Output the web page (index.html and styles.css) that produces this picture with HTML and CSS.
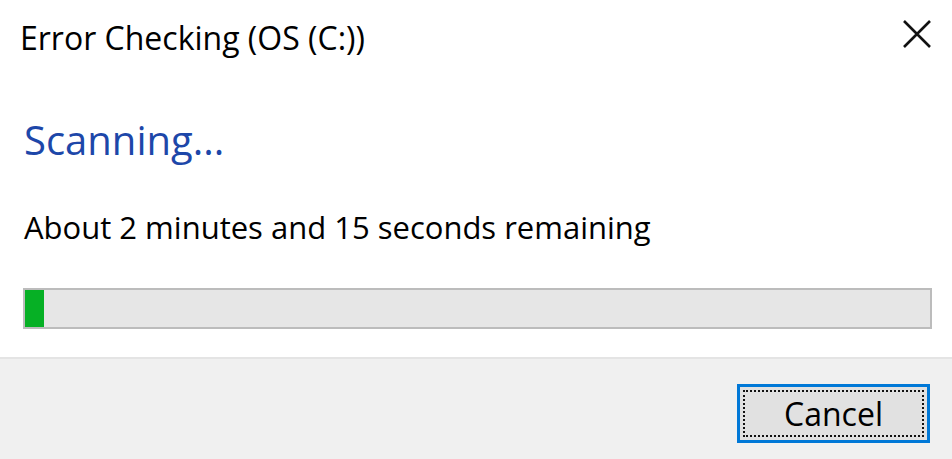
FILE: index.html
```html
<!DOCTYPE html>
<html>
<head>
<meta charset="utf-8">
<link rel="stylesheet" href="styles.css">
</head>
<body>
<div class="dialog">
  <div class="titlebar">
    <span class="title">Error Checking (OS (C:))</span>
    <span class="close">
      <svg width="30" height="30" viewBox="0 0 30 30"><path d="M2 2 L28 28 M28 2 L2 28" stroke="#111" stroke-width="2.6" fill="none"/></svg>
    </span>
  </div>
  <div class="content">
    <div class="instruction">Scanning...</div>
    <div class="status">About 2 minutes and 15 seconds remaining</div>
    <div class="progress"><div class="fill" style="width:19px"></div></div>
  </div>
  <div class="footer">
    <div class="btn"><span class="focus">Cancel</span></div>
  </div>
</div>
</body>
</html>
```

FILE: styles.css
```css
html, body {
  margin: 0;
  padding: 0;
  background: #fff;
}
.dialog {
  width: 952px;
  height: 459px;
  display: flex;
  flex-direction: column;
  font-family: "Open Sans", "Noto Sans", sans-serif;
  color: #000;
}
.titlebar {
  height: 76px;
  display: flex;
  align-items: center;
  justify-content: space-between;
  padding: 0 20px 0 20px;
  box-sizing: border-box;
}
.title {
  font-size: 32px;
  margin-top: -2px;
}
.close {
  display: flex;
  margin-top: -8px;
}
.content {
  flex: 1;
  padding: 36px 20px 0 23px;
}
.instruction {
  font-size: 40px;
  color: #1d47a9;
  line-height: 56px;
  padding-left: 1px;
}
.status {
  font-size: 31px;
  line-height: 40px;
  margin-top: 39px;
  padding-left: 1px;
}
.progress {
  margin-top: 41px;
  width: 909px;
  height: 41px;
  box-sizing: border-box;
  border: 2px solid #bcbcbc;
  background: #e6e6e6;
}
.fill {
  height: 100%;
  background: #06b025;
}
.footer {
  height: 102px;
  box-sizing: border-box;
  background: #f0f0f0;
  border-top: 2px solid #e4e4e4;
  display: flex;
  justify-content: flex-end;
  align-items: flex-start;
  padding: 25px 22px 0 0;
}
.btn {
  width: 193px;
  height: 59px;
  box-sizing: border-box;
  border: 3px solid #0078d7;
  background: #e1e1e1;
  padding: 3px;
  display: flex;
}
.focus {
  flex: 1;
  border: 2px dotted #111;
  display: flex;
  align-items: center;
  justify-content: center;
  font-size: 32px;
}
```
